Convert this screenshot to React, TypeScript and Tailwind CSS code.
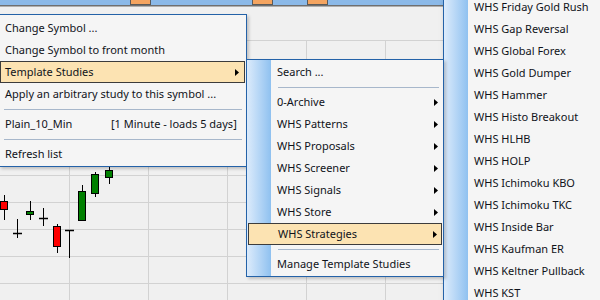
import React from 'react'

const Arrow = () => (
    <svg width="4" height="7" viewBox="0 0 4 7" className="shrink-0">
        <polygon points="0,0 4,3.5 0,7" fill="#000" />
    </svg>
)

const Sep = ({ className }: { className: string }) => (
    <div className={`h-2 flex items-center ${className}`}>
        <div className="h-px w-full bg-[#a7b7cb]" />
    </div>
)

const Chart = () => {
    const rows = [40, 67, 94, 121, 148, 175, 202, 229, 256, 283]
    const cols = [69, 148, 227, 306, 385, 464, 543]
    // [x, top wick, bottom wick, body top, body bottom, color]
    const candles: [number, number, number, number, number, string][] = [
        [4, 195, 220, 201, 209, '#ff0000'],
        [30, 201, 220, 211, 214, '#008000'],
        [57, 224, 253, 226, 246, '#ff0000'],
        [82, 185, 221, 191, 220, '#008000'],
        [95, 172, 197, 174, 193, '#008000'],
        [109, 160, 184, 170, 177, '#008000'],
    ]
    const dojis: [number, number, number, number][] = [
        [17, 219, 238, 233],
        [43, 208, 226, 218],
        [69, 230, 258, 230],
    ]
    return (
        <svg width="600" height="300" className="absolute inset-0">
            <rect x="0" y="0" width="600" height="300" fill="#f0f0f0" />
            {rows.map((y) => (
                <line key={'r' + y} x1="0" x2="600" y1={y + 0.5} y2={y + 0.5} stroke="#d2d2d2" />
            ))}
            {cols.map((x) => (
                <line key={'c' + x} x1={x + 0.5} x2={x + 0.5} y1="40" y2="300" stroke="#d2d2d2" />
            ))}
            {candles.map(([x, t, b, bt, bb, c]) => (
                <g key={'k' + x}>
                    <line x1={x + 0.5} x2={x + 0.5} y1={t} y2={b} stroke="#000" />
                    <rect x={x - 3.5} y={bt + 0.5} width="7" height={bb - bt} fill={c} stroke="#000" />
                </g>
            ))}
            {dojis.map(([x, t, b, m]) => (
                <g key={'d' + x}>
                    <line x1={x + 0.5} x2={x + 0.5} y1={t} y2={b} stroke="#000" />
                    <line x1={x - 4} x2={x + 5} y1={m + 0.5} y2={m + 0.5} stroke="#000" strokeWidth="1.5" />
                </g>
            ))}
            <rect x="0" y="0" width="600" height="5" fill="#8bb9e8" />
            <rect x="0" y="5" width="600" height="1.5" fill="#6f6f6f" />
            {[130, 252, 307].map((x) => (
                <rect key={'o' + x} x={x + 0.5} y="-1" width="20" height="5.5" fill="#f4a460" stroke="#5a5a5a" />
            ))}
        </svg>
    )
}

const menuFont = { fontFamily: '"Noto Sans", "Open Sans", sans-serif' }

const archive = [
    'WHS Friday Gold Rush',
    'WHS Gap Reversal',
    'WHS Global Forex',
    'WHS Gold Dumper',
    'WHS Hammer',
    'WHS Histo Breakout',
    'WHS HLHB',
    'WHS HOLP',
    'WHS Ichimoku KBO',
    'WHS Ichimoku TKC',
    'WHS Inside Bar',
    'WHS Kaufman ER',
    'WHS Keltner Pullback',
    'WHS KST',
]

const subItems = ['0-Archive', 'WHS Patterns', 'WHS Proposals', 'WHS Screener', 'WHS Signals', 'WHS Store']

const App = () => {
    return (
        <div
            className="relative w-[600px] h-[300px] overflow-hidden text-[11px] text-[#10131a]"
            style={menuFont}
        >
            <Chart />

            {/* strategies list, cut off at the top */}
            <div className="absolute left-[443px] top-[-5px] w-[170px] h-[320px] border-l border-[#2462a8] bg-[#f5f5f5] flex shadow-md">
                <div className="w-6 bg-gradient-to-r from-[#dcebfb] to-[#8fc1f0]" />
                <div className="pt-[1px]">
                    {archive.map((s) => (
                        <div key={s} className="h-[22px] flex items-center pl-[6px]">
                            {s}
                        </div>
                    ))}
                </div>
            </div>

            {/* first context menu */}
            <div className="absolute left-[-1px] top-[14px] w-[248px] border border-[#2462a8] bg-[#f5f5f5] pt-[2px] pb-px shadow-[2px_2px_3px_rgba(0,0,0,0.2)]">
                <div className="h-[22px] flex items-center pl-[5px]">Change Symbol ...</div>
                <div className="h-[22px] flex items-center pl-[5px]">Change Symbol to front month</div>
                <div className="h-[22px] flex items-center justify-between pl-[4px] pr-[5px] mr-px bg-[#fce3b2] border border-[#3c3c3c]">
                    <span>Template Studies</span>
                    <Arrow />
                </div>
                <div className="h-[22px] flex items-center pl-[5px]">Apply an arbitrary study to this symbol ...</div>
                <Sep className="px-[4px]" />
                <div className="h-[22px] flex items-center pl-[5px]">
                    <span className="w-[106px]">Plain_10_Min</span>
                    <span>[1 Minute - loads 5 days]</span>
                </div>
                <Sep className="px-[4px]" />
                <div className="h-[22px] flex items-center pl-[5px]">Refresh list</div>
            </div>

            {/* template studies submenu */}
            <div className="absolute left-[246px] top-[59px] w-[198px] border border-[#2462a8] bg-[#f5f5f5] flex flex-col py-px shadow-[2px_2px_3px_rgba(0,0,0,0.2)]">
                <div className="absolute left-0 top-0 bottom-0 w-6 bg-gradient-to-r from-[#dcebfb] to-[#8fc1f0]" />
                <div className="relative h-[22px] flex items-center pl-[30px]">Search ...</div>
                <Sep className="relative pl-[31px] pr-[4px]" />
                {subItems.map((s) => (
                    <div key={s} className="relative h-[22px] flex items-center justify-between pl-[30px] pr-[5px]">
                        <span>{s}</span>
                        <Arrow />
                    </div>
                ))}
                <div className="relative h-[22px] flex items-center justify-between pl-[29px] pr-[4px] mx-px bg-[#fce3b2] border border-[#3c3c3c]">
                    <span>WHS Strategies</span>
                    <Arrow />
                </div>
                <Sep className="relative pl-[31px] pr-[4px]" />
                <div className="relative h-[22px] flex items-center pl-[30px]">Manage Template Studies</div>
            </div>
        </div>
    )
}

export default App
